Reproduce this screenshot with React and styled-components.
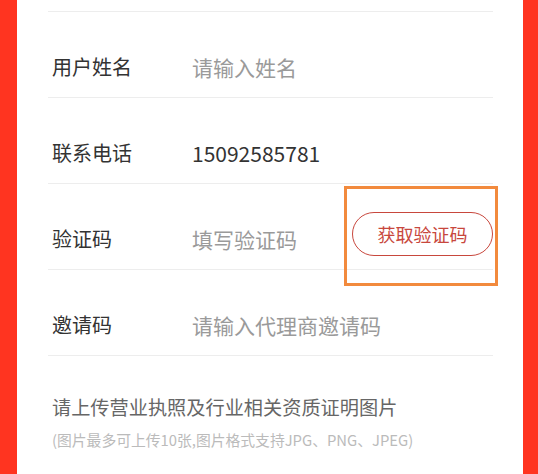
import styled, { createGlobalStyle } from "styled-components";

const GlobalStyle = createGlobalStyle`
  html, body {
    margin: 0;
    padding: 0;
    background: #ff3420;
  }
  body {
    font-family: "Noto Sans CJK SC", "Noto Sans", sans-serif;
  }
`

const Page = styled.div`
  display: flex;
  height: 474px;
  padding: 0 15px 0 17px;
  overflow: hidden;
  background: #ff3420;
`
const Card = styled.div`
  flex: 1;
  padding: 0 30px 0 31px;
  background: #fff;
`
const TopEdge = styled.div`
  height: 11px;
  border-bottom: 1px solid #ededed;
`
const Row = styled.div`
  position: relative;
  display: flex;
  align-items: center;
  height: 86px;
  padding: 25px 0 0 4px;
  box-sizing: border-box;
  border-bottom: 1px solid #ededed;
`
const Label = styled.div`
  width: 140px;
  font-size: 20px;
  line-height: 30px;
  color: #333;
`
const Field = styled.div`
  flex: 1;
  font-size: 21px;
  line-height: 30px;
  color: ${({ $filled }) => $filled ? '#333' : '#9a9a9a'};
`
const CodeButton = styled.div`
  display: flex;
  align-items: center;
  justify-content: center;
  width: 141px;
  height: 44px;
  margin-top: -10px;
  box-sizing: border-box;
  border: 1.5px solid #c8473d;
  border-radius: 22px;
  font-size: 18px;
  color: #c8473d;
`
const Highlight = styled.div`
  position: absolute;
  top: 2px;
  left: 296px;
  width: 154px;
  height: 100px;
  box-sizing: border-box;
  border: 3px solid #f28a3d;
  pointer-events: none;
`
const Upload = styled.div`
  padding: 36px 0 0 4px;
`
const UploadTitle = styled.p`
  margin: 0;
  font-size: 19.2px;
  line-height: 30px;
  color: #666;
`
const UploadHint = styled.p`
  margin: 7px 0 0;
  font-size: 14.8px;
  line-height: 22px;
  color: #bbb;
`

const rows = [
  { label: '用户姓名', value: '请输入姓名' },
  { label: '联系电话', value: '15092585781', filled: true },
  { label: '验证码', value: '填写验证码', code: true },
  { label: '邀请码', value: '请输入代理商邀请码' },
]

const App = () => {
  return (
    <>
      <GlobalStyle />
      <Page>
        <Card>
          <TopEdge />
          { rows.map(row => (
            <Row key={ row.label }>
              <Label>{ row.label }</Label>
              <Field $filled={ row.filled }>{ row.value }</Field>
              { row.code && <CodeButton>获取验证码</CodeButton> }
              { row.code && <Highlight /> }
            </Row>
          )) }
          <Upload>
            <UploadTitle>请上传营业执照及行业相关资质证明图片</UploadTitle>
            <UploadHint>(图片最多可上传10张,图片格式支持JPG、PNG、JPEG)</UploadHint>
          </Upload>
        </Card>
      </Page>
    </>
  )
}

export default App;
